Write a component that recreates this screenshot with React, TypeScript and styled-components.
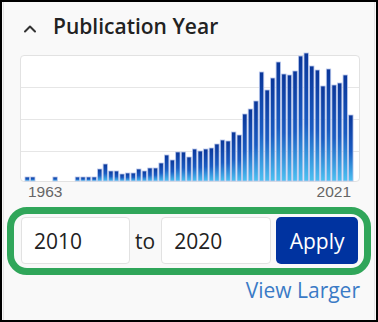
import React from 'react';
import styled, { createGlobalStyle } from 'styled-components';

const counts = [
  4, 4, 0, 0, 0, 4, 0, 0, 0, 4, 4, 4, 4, 12, 17, 10, 10, 7, 8, 8, 12, 10, 13, 13, 18, 26, 21, 29, 29, 24,
  32, 30, 32, 33, 37, 41, 40, 49, 46, 67, 72, 80, 109, 91, 103, 119, 107, 106, 110, 125, 128, 115, 111,
  95, 112, 96, 98, 106, 66,
];

const CHART_W = 338;
const CHART_H = 125;
const PITCH = 5.58;

function YearChart() {
  return (
    <ChartBox>
      <svg width={CHART_W} height={CHART_H} style={{ display: 'block', overflow: 'visible' }}>
        <defs>
          <linearGradient id="bar" x1="0" y1="0" x2="0" y2="1">
            <stop offset="0" stopColor="#0a3699" />
            <stop offset="0.55" stopColor="#1a5cc2" />
            <stop offset="1" stopColor="#4cc2f2" />
          </linearGradient>
        </defs>
        {[31, 63, 95].map((y) => (
          <line key={y} x1={0} x2={CHART_W} y1={y + 0.5} y2={y + 0.5} stroke="#e6e6e6" strokeWidth={1} />
        ))}
        {counts.map((h, i) =>
          h > 0 ? (
            <rect
              key={i}
              x={4 + i * PITCH}
              y={CHART_H - h}
              width={4.4}
              height={h}
              fill="url(#bar)"
              stroke="#b9c7ec"
              strokeWidth={0.8}
            />
          ) : null
        )}
      </svg>
    </ChartBox>
  );
}

function App() {
  return (
    <>
      <GlobalStyle />
      <Frame>
        <Panel>
          <Header>
            <Caret width="14" height="9" viewBox="0 0 14 9">
              <path d="M2 7.5 L7 2.5 L12 7.5" fill="none" stroke="#333" strokeWidth="2" strokeLinecap="round" strokeLinejoin="round" />
            </Caret>
            <Title>Publication Year</Title>
          </Header>
          <YearChart />
          <AxisLabels>
            <span>1963</span>
            <span>2021</span>
          </AxisLabels>
          <RangeForm>
            <YearInput width={109} defaultValue="2010" />
            <ToLabel>to</ToLabel>
            <YearInput width={110} defaultValue="2020" />
            <ApplyButton type="button">Apply</ApplyButton>
          </RangeForm>
          <Footer>
            <ViewLarger href="#">View Larger</ViewLarger>
          </Footer>
        </Panel>
      </Frame>
    </>
  );
}

const GlobalStyle = createGlobalStyle`
  body {
    margin: 0;
    font-family: 'Open Sans', 'Noto Sans', sans-serif;
    -webkit-font-smoothing: antialiased;
  }
`;

const Frame = styled.div`
  box-sizing: border-box;
  width: 378px;
  height: 322px;
  border: 2px solid #000;
  padding: 0 1px;
  background-color: #f9f9f9;
  display: flex;
`;

const Panel = styled.div`
  flex: 1;
  border-left: 1px solid #e4e4e4;
  border-right: 1px solid #e4e4e4;
  display: flex;
  flex-direction: column;
`;

const Header = styled.div`
  display: flex;
  align-items: center;
  padding: 10px 0 0 19px;
  height: 28px;
`;

const Caret = styled.svg`
  display: block;
  margin-top: 5px;
  margin-right: 16px;
`;

const Title = styled.h2`
  margin: 0;
  font-size: 21px;
  line-height: 28px;
  font-weight: 600;
  color: #222;
`;

const ChartBox = styled.div`
  margin: 15px 0 0 16px;
  width: 340px;
  height: 127px;
  box-sizing: border-box;
  border: 1px solid #e2e2e2;
  border-radius: 4px;
  background-color: #fff;
`;

const AxisLabels = styled.div`
  display: flex;
  justify-content: space-between;
  margin-top: 1px;
  padding: 0 23px 0 24px;
  font-family: 'Liberation Sans', Arial, sans-serif;
  font-size: 15.5px;
  line-height: 17px;
  color: #666;
`;

const RangeForm = styled.form`
  box-sizing: border-box;
  margin: 7px 3px 0 3px;
  height: 68px;
  border: 7px solid #30a65a;
  border-radius: 20px;
  padding: 3px 6px 4px 7px;
  display: flex;
  align-items: stretch;
`;

const YearInput = styled.input.attrs({ type: 'text' })<{ width: number }>`
  box-sizing: border-box;
  width: ${(p) => p.width}px;
  height: 47px;
  margin: 0;
  padding: 0 12px;
  border: 1px solid #e2e2e2;
  border-radius: 4px;
  background-color: #fff;
  color: #222;
  font-family: inherit;
  font-size: 21px;
  outline: none;
`;

const ToLabel = styled.span`
  display: flex;
  align-items: center;
  margin: 0 6px 0 5px;
  font-size: 21px;
  color: #222;
`;

const ApplyButton = styled.button`
  flex: 1;
  margin-left: 5px;
  height: 47px;
  border: none;
  border-radius: 5px;
  background-color: #0033a0;
  color: #fff;
  font-family: inherit;
  font-size: 21px;
  padding: 0;
  cursor: pointer;
`;

const Footer = styled.div`
  display: flex;
  justify-content: flex-end;
  padding: 1px 14px 0 0;
`;

const ViewLarger = styled.a`
  font-size: 21px;
  line-height: 28px;
  color: #3b7bc6;
  text-decoration: none;
`;

export default App;
